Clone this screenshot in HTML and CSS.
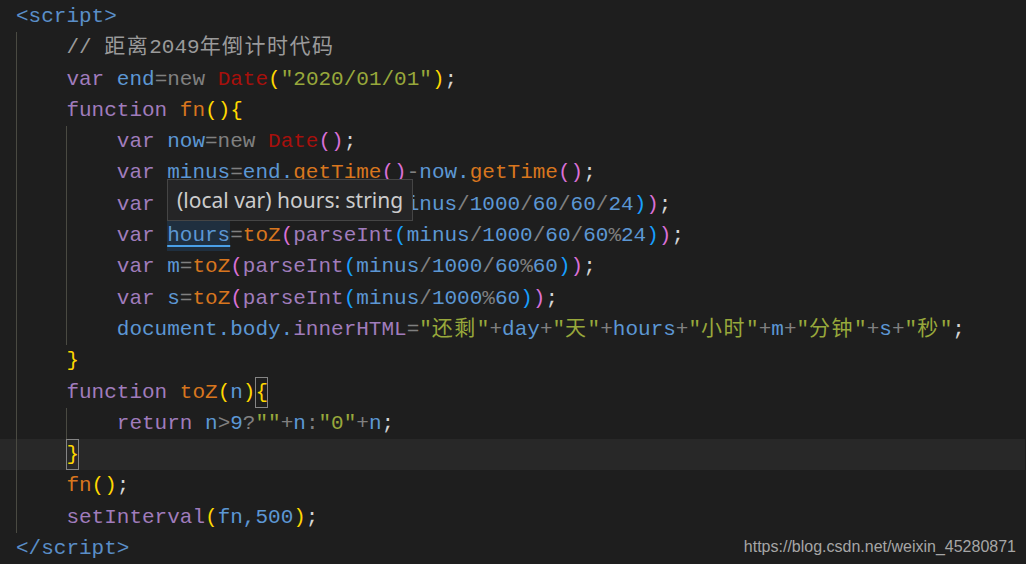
FILE: index.html
```html
<!DOCTYPE html>
<html>
<head>
  <meta charset="UTF-8">
  <title>倒计时代码</title>
  <link rel="stylesheet" href="styles.css">
</head>
<body>
  <div class="editor">
    <div class="line"><span class="t">&lt;script&gt;</span></div>
    <div class="block">
      <div class="line"><span class="cm">// <span class="zh">距离</span>2049<span class="zh">年倒计时代码</span></span></div>
      <div class="line"><span class="k">var</span> <span class="v">end</span><span class="o">=new</span> <span class="c">Date</span><span class="b1">(</span><span class="s">"2020/01/01"</span><span class="b1">)</span><span class="p">;</span></div>
      <div class="line"><span class="k">function</span> <span class="f">fn</span><span class="b1">(){</span></div>
      <div class="block">
        <div class="line"><span class="k">var</span> <span class="v">now</span><span class="o">=new</span> <span class="c">Date</span><span class="b2">()</span><span class="p">;</span></div>
        <div class="line"><span class="k">var</span> <span class="v">minus</span><span class="o">=</span><span class="v">end.</span><span class="f">getTime</span><span class="b2">()</span><span class="o">-</span><span class="v">now.</span><span class="f">getTime</span><span class="b2">()</span><span class="p">;</span></div>
        <div class="line"><span class="k">var</span> <span class="v">days</span><span class="o">=</span><span class="f">toZ</span><span class="b2">(</span><span class="k">parseInt</span><span class="b3">(</span><span class="v">minus</span><span class="o">/</span><span class="v">1000</span><span class="o">/</span><span class="v">60</span><span class="o">/</span><span class="v">60</span><span class="o">/</span><span class="v">24</span><span class="b3">)</span><span class="b2">)</span><span class="p">;</span></div>
        <div class="line"><span class="k">var</span> <span class="v hover">hours</span><span class="o">=</span><span class="f">toZ</span><span class="b2">(</span><span class="k">parseInt</span><span class="b3">(</span><span class="v">minus</span><span class="o">/</span><span class="v">1000</span><span class="o">/</span><span class="v">60</span><span class="o">/</span><span class="v">60</span><span class="o">%</span><span class="v">24</span><span class="b3">)</span><span class="b2">)</span><span class="p">;</span></div>
        <div class="line"><span class="k">var</span> <span class="v">m</span><span class="o">=</span><span class="f">toZ</span><span class="b2">(</span><span class="k">parseInt</span><span class="b3">(</span><span class="v">minus</span><span class="o">/</span><span class="v">1000</span><span class="o">/</span><span class="v">60</span><span class="o">%</span><span class="v">60</span><span class="b3">)</span><span class="b2">)</span><span class="p">;</span></div>
        <div class="line"><span class="k">var</span> <span class="v">s</span><span class="o">=</span><span class="f">toZ</span><span class="b2">(</span><span class="k">parseInt</span><span class="b3">(</span><span class="v">minus</span><span class="o">/</span><span class="v">1000</span><span class="o">%</span><span class="v">60</span><span class="b3">)</span><span class="b2">)</span><span class="p">;</span></div>
        <div class="line"><span class="v">document.body.</span><span class="k">innerHTML</span><span class="o">=</span><span class="s">"<span class="zh">还剩</span>"</span><span class="o">+</span><span class="v">day</span><span class="o">+</span><span class="s">"<span class="zh">天</span>"</span><span class="o">+</span><span class="v">hours</span><span class="o">+</span><span class="s">"<span class="zh">小时</span>"</span><span class="o">+</span><span class="v">m</span><span class="o">+</span><span class="s">"<span class="zh">分钟</span>"</span><span class="o">+</span><span class="v">s</span><span class="o">+</span><span class="s">"<span class="zh">秒</span>"</span><span class="p">;</span></div>
      </div>
      <div class="line"><span class="b1">}</span></div>
      <div class="line"><span class="k">function</span> <span class="f">toZ</span><span class="b1">(</span><span class="v">n</span><span class="b1">)</span><span class="b1 match">{</span></div>
      <div class="block">
        <div class="line"><span class="k">return</span> <span class="v">n</span><span class="o">&gt;</span><span class="v">9</span><span class="o">?</span><span class="s">""</span><span class="o">+</span><span class="v">n</span><span class="o">:</span><span class="s">"0"</span><span class="o">+</span><span class="v">n</span><span class="p">;</span></div>
      </div>
      <div class="line current"><span class="b1 match">}</span></div>
      <div class="line"><span class="f">fn</span><span class="b1">()</span><span class="p">;</span></div>
      <div class="line"><span class="k">setInterval</span><span class="b1">(</span><span class="v">fn,500</span><span class="b1">)</span><span class="p">;</span></div>
    </div>
    <div class="line"><span class="t">&lt;/script&gt;</span></div>

    <div class="tooltip">(local var) hours: string</div>
    <div class="watermark">https://blog.csdn.net/weixin_45280871</div>
  </div>
</body>
</html>
```

FILE: styles.css
```css
html, body {
  margin: 0;
  overflow: hidden;
}
body {
  background-color: #1e1e1e;
}
.editor {
  position: relative;
  height: 564px;
  box-sizing: border-box;
  padding-top: 1px;
  padding-left: 16px;
  font-family: 'Liberation Mono', 'Noto Sans CJK SC', monospace;
  font-size: 21px;
  line-height: 31.3px;
  color: #d4d4d4;
}
.line {
  height: 31.3px;
  white-space: pre;
}
.block {
  border-left: 1px solid #4a4a42;
  padding-left: 49.4px;
}
.current {
  position: relative;
}
.current::before {
  content: "";
  position: absolute;
  top: 0;
  bottom: 0;
  left: -67px;
  width: 1026px;
  background-color: #282828;
  z-index: -1;
}
.zh {
  letter-spacing: 1.5px;
}
.t { color: #5a8ec8; }
.cm { color: #9a9a9a; }
.k { color: #a07cbc; }
.v { color: #5c97d4; }
.o { color: #808080; }
.c { color: #a8100c; }
.s { color: #98a83b; }
.f { color: #d8761e; }
.p { color: #d4d4d4; }
.b1 { color: #ffd700; }
.b2 { color: #da70d6; }
.b3 { color: #179fff; }
.match {
  display: inline-block;
  height: 31.3px;
  vertical-align: top;
  box-shadow: inset 0 0 0 1px #858585;
}
.hover {
  display: inline-block;
  height: 31.3px;
  vertical-align: top;
  background-color: #1f2f3f;
  text-decoration: underline 2px #4aa0e8;
  text-underline-offset: 4px;
}
.tooltip {
  position: absolute;
  left: 167px;
  top: 179px;
  height: 40px;
  padding: 0 9px;
  border: 1px solid #454545;
  background-color: #252526;
  color: #cccccc;
  font-family: 'Noto Sans', sans-serif;
  font-size: 21px;
  line-height: 40px;
  white-space: nowrap;
}
.watermark {
  position: absolute;
  right: 10px;
  bottom: 7px;
  font-family: 'Liberation Sans', Arial, sans-serif;
  font-size: 16px;
  line-height: 20px;
  color: #a6a6a6;
}
```
